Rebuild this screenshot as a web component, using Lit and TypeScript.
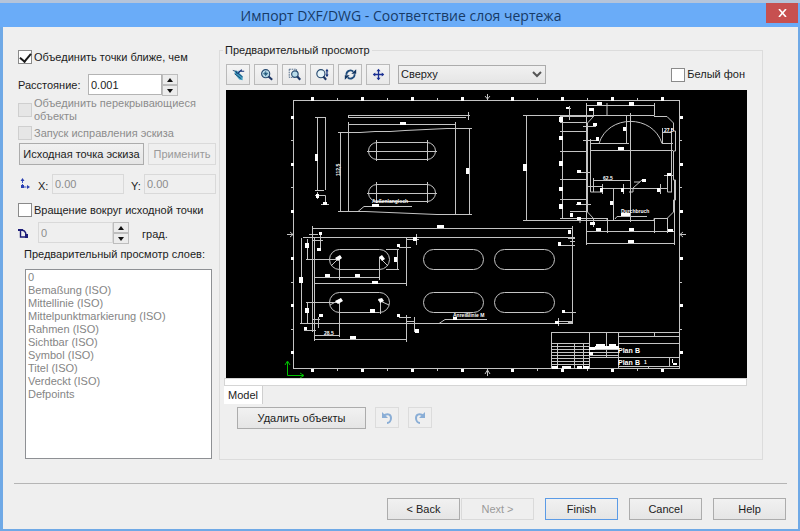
import { LitElement, html, css, svg } from "lit";
import { customElement, state } from "lit/decorators.js";

const LAYERS = [
  "0",
  "Bemaßung (ISO)",
  "Mittellinie (ISO)",
  "Mittelpunktmarkierung (ISO)",
  "Rahmen (ISO)",
  "Sichtbar (ISO)",
  "Symbol (ISO)",
  "Titel (ISO)",
  "Verdeckt (ISO)",
  "Defpoints",
];

/* A rectangle on the sheet: [x, y, width, height] */
type Box = [number, number, number, number];

const FRAME_MARKS_X = [312, 362, 412, 462, 512, 562, 612, 662];
const FRAME_MARKS_Y = [117, 164, 211, 258, 305, 352];

const OUTLINES = [
  /* side view */
  "M317.5 117V190M325.5 117V190M315 117.5H326M315 190.5H324",
  "M315 195.5H325.5V205M321 204.5H329M317.5 192V199",
  /* top view edge */
  "M348 115.5H470M348 117.5H466M348.5 115V118M468.5 112V120",
  /* trapezoid plate */
  "M348 124.5H456M348.5 122V211M455.5 122V215M340.5 132V211M469.5 129V215",
  "M338 132.5H360L375 131.5H390L405 130.5L447 128.5H472M338 211.5H365L437 214.5H472",
  "M367 151.5H437M367 193.5H437M376.5 140V161M427.5 140V161M376.5 182V203M427.5 182V203",
  "M358 211.5L364 206.5H412",
  /* base plate */
  "M312 228.5H573M312.5 226V332M314.5 237V341M303 237.5H575M300 323.5H573M572.5 226V323M568 322.5H572M301.5 238V323",
  "M307.5 239V260M306 259.5H340M307.5 302V323M306 302.5H340",
  "M339.5 258V280M379.5 258V280M314 277.5H380M314 283.5H407M406.5 238V286M397.5 249V269M386 249.5H399M386 269.5H399",
  "M339.5 300V337M314 335.5H340M314 339.5H407M406.5 315V342M380.5 300V314",
  "M331 266L341 256M379 257L388 266M330 305L341 299M378 300L389 305",
  "M320.5 232V250M309 234.5H318M312 240.5H323M399 247.5H411M406 239.5H419M416.5 234V245M568 238.5H575M561 245.5H575M570 241.5H575",
  "M318.5 317V328M304 330.5H316M312 319.5H320M399 317.5H411M406 321.5H415M414.5 317V332M564 312.5H576M558 321.5H573M558.5 318V326M572.5 312V322",
  "M439 323.5L445 319.5H487",
  /* housing view */
  "M526.5 115V220M523 115.5H593M523 220.5H607M562.5 116V219M560 122.5H587M560 131.5H587M560 151.5H587M560 179.5H587M560 199.5H587M560 218.5H593",
  "M587.5 212V123L593.5 116.5V115.5H607V103M607 115.5H654.5V103M654 116.5H667L673.5 123V131H675.5V151H673.5V180H675.5V200H673.5V212L667 218.5H654V220.5H607V218.5H593.5L587.5 212",
  "M586.5 103V245M674.5 180V245M587 105.5H654M593.5 110V117M566 108.5H571M569.5 106V120M560 116.5H593",
  "M587 231.5H675M587 243.5H675M607.5 218V233M654.5 218V233M667.5 218V233M593.5 218V227",
  "M599 143.5C608 114 653 114 662 143.5M590 143.5H629M662 143.5H673M630.5 113V222M626.5 116V143M591 150.5H673M662.5 128V143M671.5 128V192M662 132.5H672",
  "M590.5 139V192H603M593.5 178V192M593 180.5H630M602 188.5H668M602.5 184V194M623.5 184V194M660.5 184V194M667.5 176V192H672M664 175.5H674M629 192H633V188L642 180M634 182H640",
  "M613.5 188V220M583 126.5H596M583 140.5H598M580 172.5H591M586 186.5H602M576 204.5H591M570 211.5H587M580 218.5V223",
  "M615 219L617 216.5H647",
  /* title block */
  "M551.5 332.5H679.5M551.5 332V368M551 343.5H589M589.5 332V368M606.5 332V357M618.5 332V368M618 336.5H679M618 343.5H679M654.5 332V336",
  "M551 346.5H589M551 349.5H589M551 352.5H589M551 355.5H589M551 358.5H589M551 361.5H589M551 364.5H589M557.5 343V368M574.5 343V368M583.5 343V368",
  "M589 357.5H679M589 349.5H618M589 352.5H618M589 355.5H618M618 366.5H679M669.5 357V366M648.5 366V368",
];

/* Dimension figures too small to read on the sheet */
const FIGURES: Box[] = [
  [315, 154, 3, 7], [400, 122, 6, 3], [466, 168, 3, 6], [372, 204, 7, 3], [316, 194, 3, 4], [323, 202, 4, 3],
  [437, 225, 7, 3], [299, 277, 4, 6], [305, 243, 4, 5], [305, 308, 4, 5], [325, 274, 5, 3], [355, 274, 5, 3],
  [372, 281, 6, 3], [394, 257, 3, 5], [350, 336, 6, 3], [370, 309, 5, 4], [319, 232, 3, 3], [317, 248, 4, 3],
  [413, 237, 4, 4], [397, 244, 3, 3], [568, 230, 3, 4], [558, 242, 3, 4], [397, 314, 3, 3], [415, 329, 4, 4],
  [304, 327, 3, 3], [319, 314, 4, 3], [562, 310, 3, 3], [555, 321, 4, 3], [453, 317, 4, 3],
  [523, 164, 4, 7], [559, 117, 4, 5], [559, 136, 4, 4], [559, 161, 4, 5], [559, 187, 4, 4], [559, 204, 4, 5],
  [597, 102, 5, 3], [629, 102, 5, 4], [589, 108, 5, 3], [593, 123, 4, 3], [596, 137, 3, 4], [577, 170, 4, 3],
  [577, 202, 4, 3], [570, 213, 3, 4], [577, 217, 4, 3], [590, 222, 5, 3], [596, 228, 5, 3], [629, 228, 5, 3],
  [668, 229, 5, 3], [628, 240, 6, 3], [623, 127, 3, 4], [618, 147, 6, 3], [610, 201, 3, 4], [621, 213, 9, 3],
  [642, 179, 4, 3], [600, 188, 3, 4], [621, 188, 3, 4], [657, 188, 3, 4], [667, 173, 4, 3], [566, 107, 3, 2],
  [552, 366, 6, 3], [562, 366, 9, 3], [577, 366, 5, 3], [583, 366, 6, 3], [596, 344, 9, 5], [609, 344, 7, 5],
  [595, 346, 24, 3], [589, 347, 6, 3], [589, 352, 4, 3], [672, 359, 1, 4], [673, 363, 4, 2],
];

const SLOTS: Box[] = [
  [368.5, 142.5, 67, 17], [368.5, 184.5, 67, 17],
  [329.5, 249.5, 60, 20], [329.5, 292.5, 60, 20],
  [423.5, 249.5, 60, 20], [423.5, 292.5, 60, 20],
  [494.5, 249.5, 60, 20], [494.5, 292.5, 60, 20],
];

@customElement("drawing-preview")
class DrawingPreview extends LitElement {
  static styles = css`
    :host { display: block; background: #000; }
    svg { display: block; width: 100%; height: auto; }
    .line { fill: none; stroke: #c4c4c4; stroke-width: 1; }
    .solid { fill: #fff; }
    .axis { fill: none; stroke: #00c000; stroke-width: 1; }
    text { fill: #fff; font-family: "Liberation Sans", sans-serif; font-size: 5px; font-weight: bold; }
    .plan { font-size: 7px; }
  `;

  render() {
    return html`
      <svg viewBox="226 90 521 288" role="img" aria-label="Plan B">
        <rect class="line" x="293.5" y="100.5" width="386" height="268" />
        ${FRAME_MARKS_X.map((x) => svg`
          <rect class="solid" x=${x - 1} y="97" width="3" height="4" />
          <rect class="solid" x=${x - 1} y="369" width="3" height="3" />`)}
        ${FRAME_MARKS_X.slice(0, 7).map((x) => svg`
          <path class="line" d="M${x + 25.5} 98V100M${x + 25.5} 369V371" />`)}
        ${FRAME_MARKS_Y.map((y) => svg`
          <rect class="solid" x="291" y=${y - 1} width="3" height="3" />
          <rect class="solid" x="680" y=${y - 1} width="3" height="3" />`)}
        ${[140, 187, 282, 329].map((y) => svg`
          <path class="line" d="M291 ${y + 0.5}H293M680 ${y + 0.5}H682" />`)}
        <path class="line" d="M487.5 94V100M485 96L487.5 99L490 96M487.5 369V376M485 374L487.5 370L490 374M287 234.5H293M290 232L293 234.5L290 237M680 234.5H686M683 232L680 234.5L683 237" />
        ${OUTLINES.map((d) => svg`<path class="line" d=${d} />`)}
        ${SLOTS.map(([x, y, w, h]) => svg`
          <rect class="line" x=${x} y=${y} width=${w} height=${h} rx=${h / 2} />`)}
        ${FIGURES.map(([x, y, w, h]) => svg`
          <rect class="solid" x=${x} y=${y} width=${w} height=${h} />`)}
        <path class="solid" d="M335 258L340 255L342 258L338 261ZM379 257L382 255L385 259L382 261ZM335 301L341 298L343 301L338 304ZM378 299L382 298L384 301L380 303Z" />
        <text x="372" y="203">Außenlangloch</text>
        <text x="453" y="317">Anreißlinie M</text>
        <text x="621" y="213">Durchbruch</text>
        <text x="603" y="180">62,5</text>
        <text x="664" y="132">27,5</text>
        <text x="324" y="335">28,5</text>
        <text transform="translate(340 176) rotate(-90)">112,5</text>
        <text class="plan" x="618" y="353">Plan</text><text class="plan" x="635" y="353">B</text>
        <text class="plan" x="618" y="365">Plan</text><text class="plan" x="635" y="365">B</text>
        <text x="644" y="364">1</text>
        <path class="axis" d="M287.5 362V375.5H303M285 365L287.5 361L290 365M300 373L304 375.5L300 378" />
      </svg>
    `;
  }
}

const TOOLS = [
  {
    name: "Выбрать",
    icon: svg`<path d="M3 4l3-1 7 7 0 5-4-1-5-6z" fill="#3c9cc0"/><path d="M1 3l4 1 1 3M3 7l8 6M5 5l8 6" stroke="#163a66" fill="none"/><path d="M7 7l5-5M8 4h7" stroke="#12327a" stroke-width="1.5" fill="none"/>`,
  },
  {
    name: "Увеличить по размеру",
    icon: svg`<circle cx="7" cy="7" r="5" fill="#b9dcea" stroke="#274a70" stroke-width="1.4"/><path d="M10.500 10.500l4.500 4" stroke="#1d3766" stroke-width="2.600"/><path d="M7 4v6M4 7h6M5.500 5.500l3 3M8.500 5.500l-3 3" stroke="#164e72"/>`,
  },
  {
    name: "Увеличить область",
    icon: svg`<rect x="1.500" y="1.500" width="9" height="10" fill="none" stroke="#355479" stroke-dasharray="2 1"/><circle cx="8.500" cy="7.500" r="4" fill="#b9dcea" stroke="#274a70" stroke-width="1.400"/><path d="M11.500 10.500l3.500 4" stroke="#1d3766" stroke-width="2.600"/>`,
  },
  {
    name: "Изменить масштаб",
    icon: svg`<circle cx="6" cy="7" r="5" fill="#e6f3f8" stroke="#274a70" stroke-width="1.400"/><path d="M9 10.500l3.500 4" stroke="#1d3766" stroke-width="2.600"/><path d="M13.500 3v7" stroke="#12327a" stroke-width="1.500"/><path d="M11.500 4l2-3 2 3zM11.500 8l2 3 2-3z" fill="#12327a"/>`,
  },
  {
    name: "Повернуть вид",
    icon: svg`<path d="M3 8.500a5 5 0 0 1 8.500-4M13 7.500a5 5 0 0 1-8.500 4" fill="none" stroke="#1e4b7c" stroke-width="2.200"/><path d="M9 7h6V1.500zM7 9H1v5.500z" fill="#123561"/>`,
  },
  {
    name: "Переместить",
    icon: svg`<path d="M8 2v12M2 8h12" stroke="#1a2f92" stroke-width="1.600"/><path d="M5.500 4L8 1l2.500 3zM5.500 12L8 15l2.500-3zM4 5.500L1 8l3 2.500zM12 5.500L15 8l-3 2.500z" fill="#1a2f92"/>`,
  },
];

@customElement("app-root")
class AppRoot extends LitElement {
  @state() private distance = "0.001";

  static styles = css`
    * { box-sizing: border-box; }
    :host {
      display: flex;
      flex-direction: column;
      min-height: 100vh;
      border-top: 3px solid #b5c4da;
      background: #efefef;
      color: #1c1c1c;
      font-family: "Liberation Sans", Arial, sans-serif;
      font-size: 11px;
      line-height: 13px;
      box-sizing: border-box;
    }
    button, input, select { font: inherit; color: inherit; margin: 0; }

    .title {
      display: flex;
      align-items: flex-start;
      height: 24px;
      background: #6aacf8;
    }
    h1 {
      flex: 1;
      margin: 0;
      padding-left: 36px;
      text-align: center;
      font: 400 14px/25px "Open Sans", "Noto Sans", sans-serif;
      color: #173a66;
    }
    .close {
      width: 32px;
      height: 20px;
      margin-right: 2px;
      padding: 0;
      border: 0;
      background: #c75050;
      display: grid;
      place-items: center;
    }
    .body {
      flex: 1;
      display: flex;
      flex-direction: column;
      border: solid #6fa9e6;
      border-width: 0 2px 2px 3px;
      padding: 17px 11px 9px;
    }
    .main { flex: 1; display: flex; gap: 3px; }

    .side {
      width: 202px;
      padding: 6px 0 1px 4px;
      display: flex;
      flex-direction: column;
    }
    .row { display: flex; align-items: center; }
    .check { display: flex; align-items: center; gap: 2px; }
    .check.off { color: #8c8c8c; }
    input[type="checkbox"] {
      appearance: none;
      flex: none;
      width: 14px;
      height: 14px;
      border: 1px solid #8a8a8a;
      background: #fff;
      display: grid;
      place-items: center;
    }
    input[type="checkbox"]:checked::before {
      content: "";
      width: 5px;
      height: 9px;
      margin-bottom: 2px;
      border: solid #1a1a1a;
      border-width: 0 2px 2px 0;
      transform: rotate(40deg);
    }
    input[type="checkbox"]:disabled { background: #e6e6e6; border-color: #cfcfcf; }
    .field {
      min-width: 0;
      height: 20px;
      padding: 0 2px;
      border: 1px solid #b4b4b4;
      background: #fff;
    }
    .field:disabled { background: #efefef; border-color: #d9d9d9; color: #8c8c8c; }
    .spin { display: flex; height: 22px; }
    .spin .field { height: 21px; }
    .arrows { display: flex; flex-direction: column; width: 16px; }
    .arrows button {
      flex: 1;
      padding: 0;
      border: 1px solid #bdbdbd;
      background: #ececec;
      display: grid;
      place-items: center;
    }
    .distance { margin-top: 10px; justify-content: space-between; padding-right: 38px; }
    .distance .field { width: 74px; }
    .overlap { margin-top: 1px; }
    .repair { margin-top: 3px; }
    .origin { margin-top: 3px; gap: 4px; padding-left: 1px; }
    .origin .btn:first-child { width: 125px; }
    .origin .btn:last-child { width: 68px; }
    .coords { margin-top: 9px; }
    .coords label { padding-top: 4px; }
    .coords .field { width: 72px; }
    .coords .x { margin-left: 8px; width: 14px; }
    .coords .y { margin-left: 7px; width: 13px; }
    .rotate { margin-top: 9px; }
    .angle { margin-top: 5px; gap: 9px; }
    .angle .field { width: 75px; }
    .angle .unit { padding: 2px 0 0 4px; }
    .caption { margin: 4px 0 8px 6px; white-space: nowrap; }
    .layers {
      flex: 1;
      min-height: 180px;
      width: 187px;
      margin-left: 7px;
      padding: 1px 0;
      border: 1px solid #8e9094;
      border-radius: 0;
      background: #fff;
      outline: none;
      overflow: hidden;
      opacity: 1;
    }
    .layers option {
      display: block;
      min-height: 13px;
      height: 13px;
      padding: 0 2px;
      line-height: 13px;
      color: #858585;
    }

    .btn {
      height: 22px;
      padding: 0;
      border: 1px solid #acacac;
      background: linear-gradient(#f1f1f1, #e5e5e5);
      white-space: nowrap;
    }
    .btn:disabled { color: #9a9a9a; border-color: #dadada; background: #efefef; }

    fieldset {
      flex: 1;
      min-width: 0;
      margin: 0 24px 0 0;
      padding: 0 15px 28px 4px;
      border: 1px solid #dcdcdc;
    }
    legend { padding: 0 2px; margin-left: -1px; }
    .tools { display: flex; align-items: center; padding: 7px 0 5px 2px; }
    .toolset { display: flex; gap: 4px; }
    .tool {
      width: 24px;
      height: 21px;
      padding: 0;
      border: 1px solid #bababa;
      background: linear-gradient(#f4f4f4, #e8e8e8);
      display: grid;
      place-items: center;
    }
    .tool:disabled { border-color: #dcdcdc; background: #efefef; }
    .view { display: grid; width: 148px; margin-left: 8px; align-items: center; }
    .view select {
      grid-area: 1 / 1;
      appearance: none;
      height: 19px;
      padding: 0 2px;
      border: 1px solid #acacac;
      border-radius: 0;
      line-height: 17px;
      background: linear-gradient(#f1f1f1, #e5e5e5);
    }
    .view svg { grid-area: 1 / 1; justify-self: end; margin-right: 4px; pointer-events: none; }
    .white { margin-left: auto; padding-right: 2px; }
    .sheet { margin-left: 2px; }
    .tabs { border: 1px solid #d5d5d5; height: 8px; background: #fff; }
    .tab {
      width: 39px;
      height: 18px;
      padding: 0;
      border: 0;
      border-right: 1px solid #cfcfcf;
      background: #fff;
      display: block;
    }
    .edit { display: flex; gap: 9px; margin: 3px 0 0 13px; }
    .edit .btn { width: 129px; }

    hr { width: 100%; margin: 23px 0 14px; border: 0; border-top: 1px solid #b5b5b5; }
    footer { display: flex; justify-content: flex-end; gap: 11px; padding-right: 1px; }
    footer .btn { width: 73px; }
    .pair { display: flex; gap: 1px; }
    .btn.default { border-color: #5b9be6; }
  `;

  private arrows(disabled: boolean, what: string) {
    return html`
      <span class="arrows">
        <button aria-label="${what}: больше" ?disabled=${disabled}>
          <svg width="6" height="4"><path d="M0 4L3 0l3 4z" fill="#111" /></svg>
        </button>
        <button aria-label="${what}: меньше" ?disabled=${disabled}>
          <svg width="6" height="4"><path d="M0 0l3 4 3-4z" fill="#111" /></svg>
        </button>
      </span>
    `;
  }

  render() {
    return html`
      <header class="title">
        <h1>Импорт DXF/DWG - Соответствие слоя чертежа</h1>
        <button class="close" aria-label="Закрыть">
          <svg width="9" height="8"><path d="M1 0l7 8M8 0L1 8" stroke="#fff" stroke-width="1.600" /></svg>
        </button>
      </header>
      <div class="body">
        <div class="main">
          <section class="side">
            <label class="check"><input type="checkbox" checked />Объединить точки ближе, чем</label>
            <div class="row distance">
              <label for="distance">Расстояние:</label>
              <span class="spin">
                <input id="distance" class="field" .value=${this.distance}
                  @input=${(e: Event) => (this.distance = (e.target as HTMLInputElement).value)} />
                ${this.arrows(false, "Расстояние")}
              </span>
            </div>
            <label class="check off overlap"><input type="checkbox" disabled />Объединить перекрывающиеся объекты</label>
            <label class="check off repair"><input type="checkbox" disabled />Запуск исправления эскиза</label>
            <div class="row origin">
              <button class="btn">Исходная точка эскиза</button>
              <button class="btn" disabled>Применить</button>
            </div>
            <div class="row coords">
              <svg width="12" height="12" viewBox="0 0 12 12">
                <path d="M4.500 2v7H10" fill="none" stroke="#3a55c8" stroke-dasharray="3 1" />
                <path d="M2.500 3l2-3 2 3zM9 7l3 2-3 2zM3 7h3v3H3z" fill="#2a3fb0" />
              </svg>
              <label class="x" for="x">X:</label><input id="x" class="field" value="0.00" disabled />
              <label class="y" for="y">Y:</label><input id="y" class="field" value="0.00" disabled />
            </div>
            <label class="check rotate"><input type="checkbox" />Вращение вокруг исходной точки</label>
            <div class="row angle">
              <svg width="11" height="12" viewBox="0 0 11 12">
                <path d="M2.500 2v8H10M2 3.500c4-1 6 1 6 5" fill="none" stroke="#1d1d78" stroke-width="1.400" />
                <path d="M0 2h5v2H0zM7 7h3v4H7z" fill="#1d1d78" />
              </svg>
              <span class="spin">
                <input class="field" aria-label="Угол" value="0" disabled />
                ${this.arrows(true, "Угол")}
              </span>
              <span class="unit">град.</span>
            </div>
            <label class="caption" for="layers">Предварительный просмотр слоев:</label>
            <select id="layers" class="layers" multiple size="10" disabled>
              ${LAYERS.map((name) => html`<option>${name}</option>`)}
            </select>
          </section>

          <fieldset>
            <legend>Предварительный просмотр</legend>
            <div class="tools">
              <div class="toolset">
                ${TOOLS.map((t) => html`
                  <button class="tool" aria-label=${t.name}>
                    <svg width="13" height="13" viewBox="0 0 16 16">${t.icon}</svg>
                  </button>`)}
              </div>
              <span class="view">
                <select aria-label="Вид"><option>Сверху</option></select>
                <svg width="10" height="7"><path d="M1 1l4 4 4-4" fill="none" stroke="#555" stroke-width="2" /></svg>
              </span>
              <label class="check white"><input type="checkbox" />Белый фон</label>
            </div>
            <drawing-preview class="sheet"></drawing-preview>
            <div class="tabs"></div>
            <button class="tab">Model</button>
            <div class="edit">
              <button class="btn">Удалить объекты</button>
              <button class="tool" disabled aria-label="Отменить">
                <svg width="12" height="12" viewBox="0 0 12 12">
                  <path d="M2 4c4-3 8-2 8 2 0 3-2 5-4 5" fill="none" stroke="#8aaed6" stroke-width="2" />
                  <path d="M1 0v6h6z" fill="#8aaed6" />
                </svg>
              </button>
              <button class="tool" disabled aria-label="Вернуть">
                <svg width="12" height="12" viewBox="0 0 12 12">
                  <path d="M10 4c-4-3-8-2-8 2 0 3 2 5 4 5" fill="none" stroke="#8aaed6" stroke-width="2" />
                  <path d="M11 0v6H5z" fill="#8aaed6" />
                </svg>
              </button>
            </div>
          </fieldset>
        </div>
        <hr />
        <footer>
          <span class="pair">
            <button class="btn">&lt; Back</button>
            <button class="btn" disabled>Next &gt;</button>
          </span>
          <button class="btn default">Finish</button>
          <button class="btn">Cancel</button>
          <button class="btn">Help</button>
        </footer>
      </div>
    `;
  }
}
